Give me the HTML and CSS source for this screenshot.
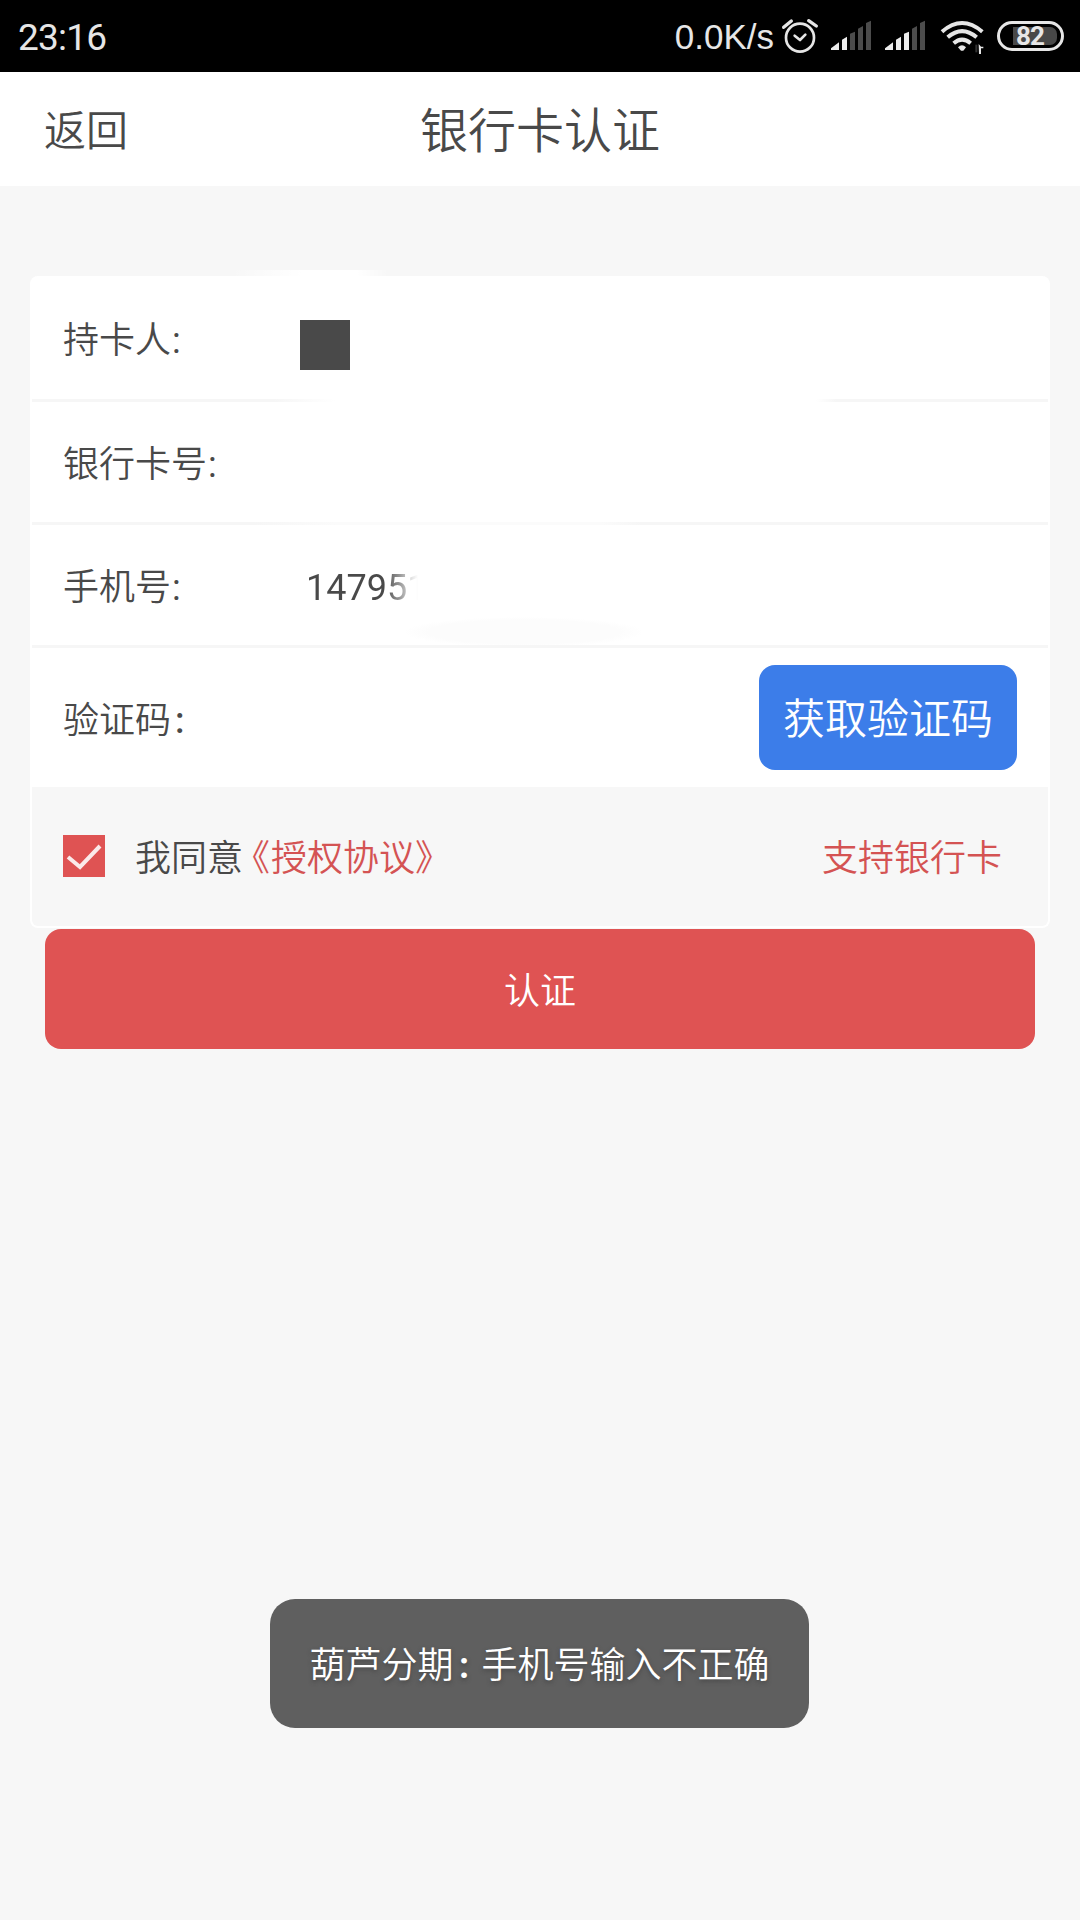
FILE: index.html
```
<!DOCTYPE html>
<html lang="zh-CN">
<head>
<meta charset="utf-8">
<title>银行卡认证</title>
<link rel="stylesheet" href="styles.css">
</head>
<body>
<header class="status">
  <span class="clock">23:16</span>
  <div class="tray">
    <span class="speed">0.0K/s</span>
    <svg class="alarm" width="39" height="40" viewBox="360 48 117 120" fill="none" stroke="#e6e6e6" stroke-linecap="round">
      <circle cx="420" cy="113" r="42" stroke-width="8"/>
      <path d="M371 82L394 63M469 78L446 62" stroke-width="10"/>
      <path d="M404 107L420 120L436 104" stroke-width="8" stroke-linejoin="round"/>
    </svg>
    <svg class="signal" width="42" height="40" viewBox="510 48 126 120">
      <path class="on" d="M513 145L537 127V150H513ZM546 119L561 110V150H546Z"/>
      <path class="off" d="M570 101L585 95V150H570ZM594 86L609 78V150H594ZM618 69L633 62V150H618Z"/>
    </svg>
    <svg class="signal second" width="42" height="40" viewBox="672 48 126 120">
      <path class="on" d="M675 145L699 127V150H675ZM708 119L723 110V150H708ZM732 101L747 95V150H732Z"/>
      <path class="off" d="M756 86L771 78V150H756ZM780 69L795 62V150H780Z"/>
    </svg>
    <svg class="wifi" width="44" height="40" viewBox="840 48 132 120" fill="none" stroke="#e6e6e6" stroke-width="12">
      <path d="M846 95Q906 43 967 95M863 112Q906 75 950 112M881 130Q906 108 932 130"/>
      <path d="M894 142Q906 130 918 142L910 152H903Z" fill="#e6e6e6" stroke="none"/>
      <path d="M949 134V157" stroke="#333" stroke-width="6"/>
      <path d="M956 132L963 140H970V145H963V162H957Z" fill="#e6e6e6" stroke="none"/>
    </svg>
    <div class="battery"><span class="level">82</span></div>
  </div>
</header>
<nav class="topbar">
  <a class="back">返回</a>
  <h1 class="title">银行卡认证</h1>
</nav>
<main class="page">
  <section class="card">
    <div class="row holder">
      <label class="label">持卡人<span class="colon">:</span></label>
      <span class="block"></span>
    </div>
    <div class="row number"><label class="label">银行卡号<span class="colon">:</span></label></div>
    <div class="row phone">
      <label class="label">手机号<span class="colon">:</span></label>
      <span class="phone-value">147951</span>
    </div>
    <div class="row code">
      <label class="label">验证码<span class="wide-colon">:</span></label>
      <button class="get-code">获取验证码</button>
    </div>
    <div class="agree">
      <svg class="check" width="42" height="42" viewBox="0 0 42 42"><path d="M5 22L17 32L37 11" fill="none" stroke="#fbeaea" stroke-width="4"/></svg>
      <span class="agree-text">我同意<span class="link"><span class="open">《</span>授权协议》</span></span>
      <a class="link banks">支持银行卡</a>
    </div>
  </section>
  <button class="submit">认证</button>
</main>
<div class="toast">葫芦分期<span class="toast-colon">:</span>手机号输入不正确</div>
</body>
</html>
```
FILE: styles.css
```
* { box-sizing: border-box; }
body {
  margin: 0;
  width: 1080px;
  height: 1920px;
  overflow: hidden;
  position: relative;
  background: #f7f7f7;
  color: #494949;
  font: 350 36px/1 Roboto, "Noto Sans CJK SC DemiLight", "Noto Sans CJK SC", sans-serif;
}
button { border: 0; padding: 0; font: inherit; color: #fff; }
.status {
  height: 72px;
  padding: 0 16px 0 18px;
  display: flex;
  align-items: center;
  justify-content: space-between;
  background: #000;
  color: #e6e6e6;
}
.clock { font-size: 37px; font-weight: 400; line-height: 40px; letter-spacing: -0.8px; padding-top: 4px; }
.tray { display: flex; align-items: center; }
.speed { font: 35px/40px "Liberation Sans", sans-serif; margin-right: 6px; padding-top: 2px; }
.signal { margin-left: 11px; }
.signal.second { margin-left: 12px; }
.on { fill: #ececec; }
.off { fill: #4c4c4c; }
.wifi { margin: 0 13px 0 14px; }
.battery {
  width: 67px;
  height: 30px;
  border: 3px solid #e6e6e6;
  border-radius: 15px;
  padding: 3px 4px 3px 13px;
}
.level {
  display: block;
  height: 18px;
  border-radius: 0 7px 7px 0;
  background: #484848;
  padding-left: 3px;
  font: 700 26px/19px Roboto, sans-serif;
  letter-spacing: -1px;
}
.topbar {
  height: 114px;
  padding: 5px 44px 0;
  display: grid;
  grid-template-columns: 1fr auto 1fr;
  align-items: center;
  background: #fff;
}
.back { font-size: 42px; }
.title { margin: 0; font-size: 48px; font-weight: 350; }
.page { padding: 90px 30px 0; }
.card {
  position: relative;
  height: 652px;
  border: 2px solid #fff;
  border-top: 0;
  border-radius: 8px;
  background: #fff;
}
/* Rounded highlight overlapping the card's top edge */
.card::before {
  content: "";
  position: absolute;
  left: 200px;
  top: -6px;
  width: 156px;
  height: 8px;
  background: linear-gradient(90deg, transparent, #fff 45%, #fff 80%, transparent);
}
.row {
  display: flex;
  align-items: center;
  padding: 0 31px;
  border-bottom: 3px solid #f6f6f6;
}
.label { width: 240px; white-space: nowrap; padding-top: 6px; }
.colon { font-weight: 400; margin-left: 1px; }
.holder {
  height: 126px;
  border-image: linear-gradient(90deg, #f6f6f6 24%, #fff 30%, #fff 77%, #f6f6f6 79%) 3;
  border-width: 0 0 3px;
}
.block { width: 50px; height: 50px; margin: 14px 0 0 -3px; background: #494949; }
.number {
  height: 123px;
  border-image: linear-gradient(90deg, #f6f6f6 22%, #fbfbfb 30%, #fbfbfb 56%, #f6f6f6 60%) 3;
  border-width: 0 0 3px;
}
.phone {
  height: 123px;
  background: radial-gradient(ellipse 120px 15px at 492px 107px, #fcfcfc 80%, transparent) no-repeat;
}
.phone-value {
  margin-left: 3px;
  padding-top: 6px;
  font-weight: 400;
  background: linear-gradient(90deg, #494949 78px, #999 94px, #e4e4e4 106px, #fff 112px);
  -webkit-background-clip: text;
  background-clip: text;
  color: transparent;
}
.code { height: 139px; border: 0; justify-content: space-between; }
.wide-colon { margin-left: 4px; font-weight: 500; }
.get-code {
  width: 258px;
  height: 105px;
  padding-top: 4px;
  border-radius: 16px;
  background: #3c7de9;
  font-size: 42px;
}
.agree {
  height: 139px;
  padding: 0 46px 0 31px;
  display: flex;
  align-items: center;
  background: #f7f7f7;
  border-radius: 0 0 6px 6px;
}
.check { background: #df5353; margin: 0 30px 1px 0; }
.agree-text { padding-top: 5px; }
.link { color: #d45353; }
.open { margin: 0 1px 0 9px; font-feature-settings: "halt"; }
.banks { margin-left: auto; padding-top: 5px; }
.submit {
  display: block;
  width: 990px;
  height: 120px;
  margin: 1px auto 0;
  padding-top: 5px;
  border-radius: 16px;
  background: #df5353;
}
.toast {
  position: absolute;
  left: 270px;
  top: 1599px;
  width: 539px;
  height: 129px;
  padding-top: 5px;
  border-radius: 25px;
  display: flex;
  align-items: center;
  justify-content: center;
  background: #5f5f5f;
  color: #fff;
  text-shadow: 0 2px 4px #3338;
}
.toast-colon { width: 28px; padding-right: 7px; text-align: center; font-weight: 700; }
```
